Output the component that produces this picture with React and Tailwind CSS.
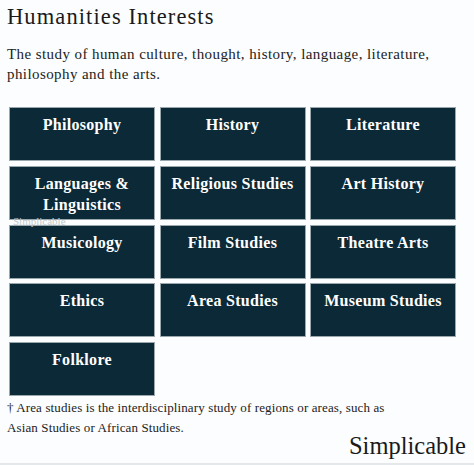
export default function App() {
  const items = [
    "Philosophy", "History", "Literature",
    "Languages & Linguistics", "Religious Studies", "Art History",
    "Musicology", "Film Studies", "Theatre Arts",
    "Ethics", "Area Studies", "Museum Studies",
    "Folklore",
  ];
  return (
    <div className="relative w-[474px] h-[465px] bg-[#fbfdfe] overflow-hidden" style={{ fontFamily: '"Liberation Serif", "Times New Roman", serif' }}>
      <div className="pl-[7px] pt-[3px] text-[22.5px] leading-[28px] tracking-[1.1px] text-[#1a1a1a] whitespace-nowrap">Humanities Interests</div>
      <div className="pl-[7px] pt-[13px] text-[15px] leading-[20px] tracking-[0.42px] text-[#222] whitespace-nowrap">
        The study of human culture, thought, history, language, literature,<br />philosophy and the arts.
      </div>
      <div className="relative ml-[10px] mt-[24px] grid grid-cols-[144px_144px_144px] gap-x-[6.5px] gap-y-[6.75px]">
        {items.map((t) => (
          <div key={t} className="h-[52px] bg-[#0c2937] outline outline-1 outline-[#9aa7ad] flex justify-center pt-[6px] px-1">
            <div className="text-center text-white font-bold text-[16px] leading-[21px] tracking-[0.3px] whitespace-nowrap">{t === "Languages & Linguistics" ? <>Languages &amp;<br />Linguistics</> : t}</div>
          </div>
        ))}
        <div className="absolute left-[3px] top-[108px] text-[11px] leading-none text-[#c3cacd]">Simplicable</div>
      </div>
      <div className="pl-[7px] pt-[3px] text-[13px] leading-[20px] tracking-[0.12px] text-[#222] whitespace-nowrap">
        † Area studies is the interdisciplinary study of regions or areas, such as<br />Asian Studies or African Studies.
      </div>
      <div className="absolute right-[8px] top-[432px] text-[24.5px] leading-[28px] text-[#1a1a1a]">Simplicable</div>
      <div className="absolute left-0 right-0 bottom-0 h-[2px] bg-[#e5e8ea]" />
    </div>
  );
}
